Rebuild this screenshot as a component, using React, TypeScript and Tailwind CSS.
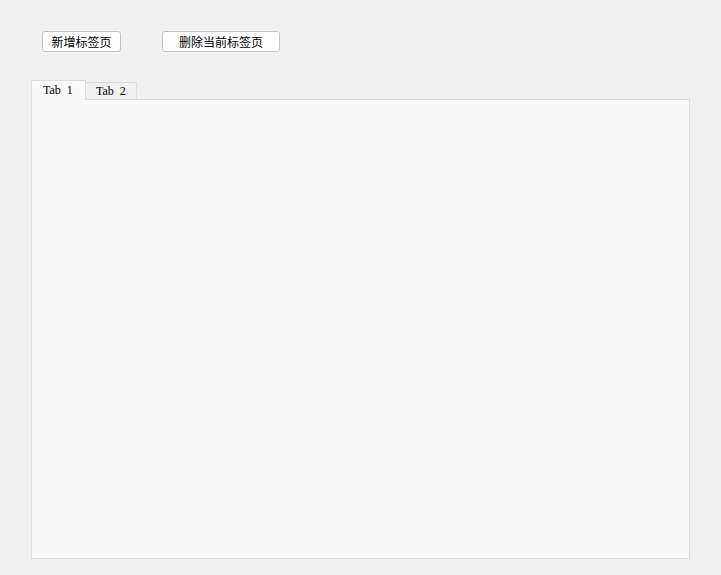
export default function App() {
  return (
    <div className="h-[575px] w-[721px] bg-[#f0f0f0] [font-family:'Noto_Sans_CJK_SC',sans-serif]">
      <div className="flex items-start pl-[42px] pt-[31px]">
        <button
          type="button"
          className="flex h-[21px] w-[79px] items-center justify-center rounded-[3px] border border-[#c4c4c4] bg-white text-[12px] leading-none text-black"
        >
          新增标签页
        </button>
        <button
          type="button"
          className="ml-[41px] flex h-[21px] w-[118px] items-center justify-center rounded-[3px] border border-[#c4c4c4] bg-white text-[12px] leading-none text-black"
        >
          删除当前标签页
        </button>
      </div>

      <div className="ml-[31px] mt-[28px] w-[659px]">
        <div className="flex items-end">
          <div className="relative z-10 -mb-px flex h-[20px] w-[55px] items-start border border-b-0 border-[#dcdcdc] bg-[#f9f9f9] pl-[11px] pt-[2px] text-[12px] leading-[14px] text-black [font-family:'Liberation_Serif',serif]">
            Tab&nbsp;&nbsp;1
          </div>
          <div className="flex h-[17px] w-[51px] items-start border border-l-0 border-b-0 border-[#dcdcdc] bg-[#f0f0f0] pl-[10px] pt-[1px] text-[12px] leading-[14px] text-black [font-family:'Liberation_Serif',serif]">
            Tab&nbsp;&nbsp;2
          </div>
        </div>
        <div className="h-[460px] border border-[#dcdcdc] bg-[#f9f9f9]" />
      </div>
    </div>
  )
}
